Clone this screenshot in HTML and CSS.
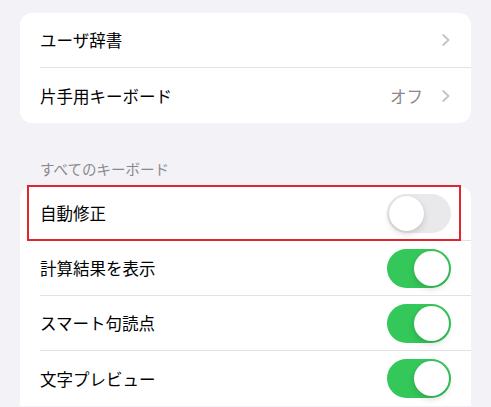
FILE: index.html
```html
<!DOCTYPE html>
<html lang="ja">
<head>
<meta charset="utf-8">
<link rel="stylesheet" href="styles.css">
</head>
<body>
<div class="page">
  <div class="card">
    <div class="row">
      <div class="row-inner">
        <span class="label">ユーザ辞書</span>
        <span class="trail">
          <svg class="chev" width="8" height="12" viewBox="0 0 8 12"><polyline points="1.2,1 6.5,6 1.2,11" fill="none" stroke="#c4c4c7" stroke-width="1.8" stroke-linecap="round" stroke-linejoin="round"/></svg>
        </span>
      </div>
    </div>
    <div class="row">
      <div class="row-inner">
        <span class="label">片手用キーボード</span>
        <span class="trail">
          <span class="value">オフ</span>
          <svg class="chev" width="8" height="12" viewBox="0 0 8 12"><polyline points="1.2,1 6.5,6 1.2,11" fill="none" stroke="#c4c4c7" stroke-width="1.8" stroke-linecap="round" stroke-linejoin="round"/></svg>
        </span>
      </div>
    </div>
  </div>

  <div class="section-header">すべてのキーボード</div>

  <div class="card card-annotated">
    <div class="row">
      <div class="row-inner">
        <span class="label">自動修正</span>
        <span class="toggle"><span class="knob"></span></span>
      </div>
    </div>
    <div class="row">
      <div class="row-inner">
        <span class="label">計算結果を表示</span>
        <span class="toggle on"><span class="knob"></span></span>
      </div>
    </div>
    <div class="row">
      <div class="row-inner">
        <span class="label">スマート句読点</span>
        <span class="toggle on"><span class="knob"></span></span>
      </div>
    </div>
    <div class="row">
      <div class="row-inner">
        <span class="label">文字プレビュー</span>
        <span class="toggle on"><span class="knob"></span></span>
      </div>
    </div>
    <div class="highlight"></div>
  </div>
</div>
</body>
</html>
```

FILE: styles.css
```css
html, body {
  margin: 0;
  padding: 0;
  background: #f2f2f7;
}
body {
  font-family: "Noto Sans CJK JP", "Noto Sans", sans-serif;
  color: #000;
}
.page {
  padding: 13px 20px 0 20px;
  display: flex;
  flex-direction: column;
}
.card {
  background: #fff;
  border-radius: 12px;
  display: flex;
  flex-direction: column;
}
.card-annotated {
  position: relative;
  border-radius: 12px 12px 0 0;
}
.row {
  padding-left: 20px;
  display: flex;
}
.row-inner {
  flex: 1;
  height: 55px;
  box-sizing: border-box;
  display: flex;
  align-items: center;
  justify-content: space-between;
  padding-right: 20px;
  border-bottom: 1px solid #e2e2e5;
}
.row:last-child .row-inner,
.card-annotated .row:nth-child(4) .row-inner {
  border-bottom: none;
}
.label {
  font-size: 16.5px;
  line-height: 20px;
  letter-spacing: 0;
}
.trail {
  display: flex;
  align-items: center;
  gap: 19px;
}
.value {
  font-size: 16.5px;
  line-height: 20px;
  color: #8a8a8e;
}
.chev {
  display: block;
  margin-right: 1px;
}
.section-header {
  font-size: 14.5px;
  line-height: 20px;
  color: #8a8a8e;
  padding: 36px 0 7px 20px;
}
.toggle {
  width: 64px;
  height: 39px;
  border-radius: 20px;
  background: #e9e9eb;
  position: relative;
  flex: none;
}
.toggle.on {
  background: #34c759;
}
.knob {
  position: absolute;
  top: 2px;
  left: 2px;
  width: 35px;
  height: 35px;
  border-radius: 50%;
  background: #fff;
  box-shadow: 0 3px 6px rgba(0,0,0,0.15), 0 0 1px rgba(0,0,0,0.12);
}
.toggle.on .knob {
  left: 27px;
}
.highlight {
  position: absolute;
  left: 7px;
  top: -1px;
  width: 434px;
  height: 56px;
  box-sizing: border-box;
  border: 2px solid #e0262c;
}
```
